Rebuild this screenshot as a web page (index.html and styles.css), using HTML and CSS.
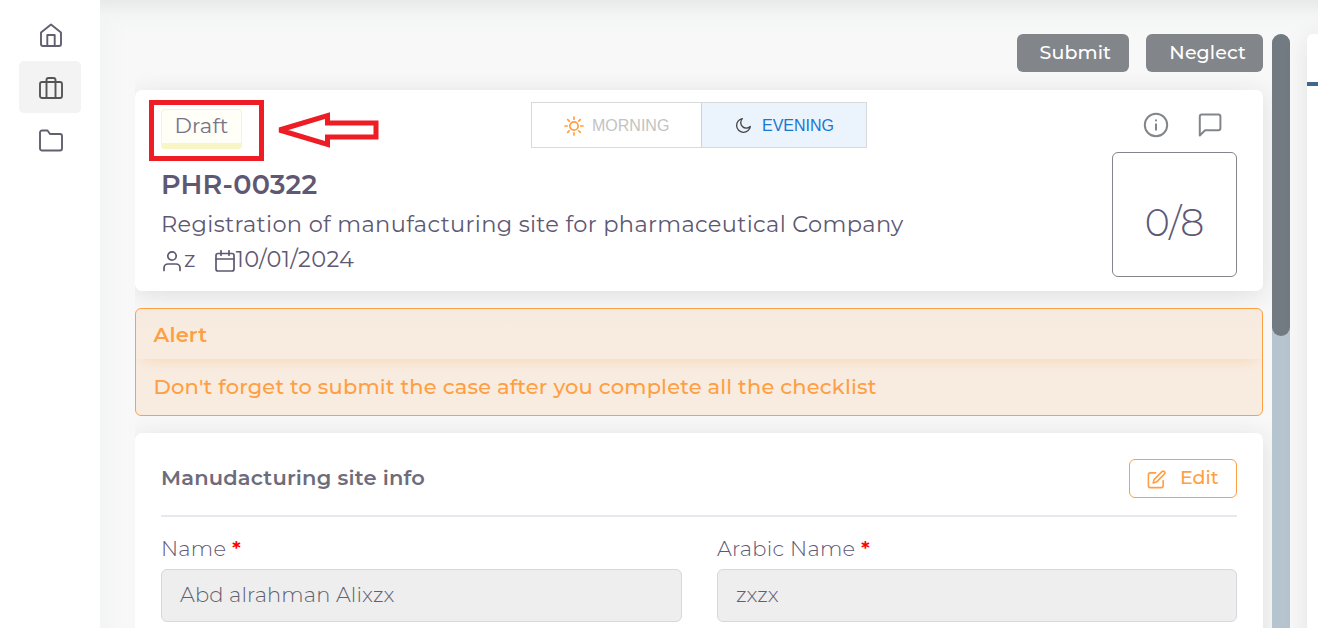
FILE: index.html
```
<!DOCTYPE html>
<html lang="en">
<head>
<meta charset="utf-8">
<title>PHR-00322</title>
<link rel="stylesheet" href="styles.css">
</head>
<body>
<div class="app">
  <nav class="sidebar">
    <a class="nav-item"><svg class="icon" viewBox="0 0 24 24"><path d="M2 9.500 12 1.500l10 8V21a2 2 0 0 1-2 2H4a2 2 0 0 1-2-2z"/><path d="M8.300 23V12h7.400v11"/></svg></a>
    <a class="nav-item active"><svg class="icon" viewBox="0 0 24 24"><rect x="1" y="6" width="22" height="16" rx="2"/><path d="M7.500 22V4a2 2 0 0 1 2-2h5a2 2 0 0 1 2 2v18"/></svg></a>
    <a class="nav-item"><svg class="icon" viewBox="0 0 24 24"><path d="M23 19.500a2 2 0 0 1-2 2H3a2 2 0 0 1-2-2v-16a2 2 0 0 1 2-2h5.500l2.500 3.500h10a2 2 0 0 1 2 2z"/></svg></a>
  </nav>
  <main class="main">
    <div class="content">
      <div class="actions">
        <button class="btn submit">Submit</button>
        <button class="btn neglect">Neglect</button>
      </div>
      <section class="card summary">
        <div class="summary-top">
          <span class="badge">Draft</span>
          <div class="toggle">
            <div class="shift morning"><svg class="sun" viewBox="0 0 20 20"><circle cx="10" cy="10" r="4.200"/><path d="M10 1v2.200M10 16.800V19M1 10h2.200M16.800 10H19M3.700 3.700l1.500 1.500M14.800 14.800l1.500 1.500M3.700 16.300l1.500-1.500M14.800 5.200l1.500-1.500"/></svg><span>MORNING</span></div>
            <div class="shift evening"><svg class="moon" viewBox="0 0 18 18"><path d="M16.200 10.100A7.300 7.300 0 1 1 7.800 1.700a5.900 5.900 0 0 0 8.400 8.400z"/></svg><span>EVENING</span></div>
          </div>
          <div class="tools">
            <svg class="tool" viewBox="0 0 26 26"><circle cx="13" cy="13" r="11.200"/><path d="M13 12.300v5.400M13 8.200v.4"/></svg>
            <svg class="tool" viewBox="0 0 26 26"><path d="M2.800 23.500V4.600a2 2 0 0 1 2-2h16.600a2 2 0 0 1 2 2v11.600a2 2 0 0 1-2 2H8.100z"/></svg>
          </div>
        </div>
        <div class="summary-body">
          <div class="details">
            <h1 class="case-id">PHR-00322</h1>
            <p class="case-name">Registration of manufacturing site for pharmaceutical Company</p>
            <div class="meta">
              <svg class="user" viewBox="0 0 20 22"><circle cx="10" cy="6" r="4.200"/><path d="M2 20.500V18a4 4 0 0 1 4-4h8a4 4 0 0 1 4 4v2.500"/></svg><span>z</span>
              <svg class="cal" viewBox="0 0 20 22"><rect x="1" y="3.500" width="18" height="17.500" rx="2"/><path d="M1 9h18M6 .8v4.400M14 .8v4.400"/></svg><span>10/01/2024</span>
            </div>
          </div>
          <div class="counter">0/8</div>
        </div>
      </section>
      <section class="alert">
        <h2 class="alert-title">Alert</h2>
        <p class="alert-text">Don't forget to submit the case after you complete all the checklist</p>
      </section>
      <section class="card form">
        <header class="form-head">
          <h2 class="form-title">Manudacturing site info</h2>
          <button class="edit"><svg class="pencil" viewBox="0 0 20 20"><path d="M9 3H3.500a2 2 0 0 0-2 2v11.500a2 2 0 0 0 2 2h11.500a2 2 0 0 0 2-2V11"/><path d="m15.500 2 .3-.3a1.700 1.700 0 0 1 2.500 2.500L10 12.700l-3.500 1 .9-3.600z"/></svg><span>Edit</span></button>
        </header>
        <div class="fields">
          <label class="field"><span class="label">Name <b class="req">*</b></span><span class="input">Abd alrahman Alixzx</span></label>
          <label class="field"><span class="label">Arabic Name <b class="req">*</b></span><span class="input">zxzx</span></label>
        </div>
      </section>
    </div>
    <div class="scroll-track"><div class="scroll-thumb"></div></div>
    <aside class="side-panel"><div class="tab-line"></div></aside>
  </main>
</div>
<div class="highlight"></div>
<svg class="arrow" viewBox="0 0 104 36"><path d="M3.500 18 51.500 3.500V11H100v14H51.500v7.500z"/></svg>
</body>
</html>
```
FILE: styles.css
```
* { box-sizing: border-box; }
body { margin: 0; height: 628px; overflow: hidden; background: #f7f7f7; color: #5e5873; font-family: Montserrat, Inter, sans-serif; position: relative; }
h1, h2, p { margin: 0; font-weight: inherit; }
svg { fill: none; stroke: currentColor; stroke-linecap: round; stroke-linejoin: round; flex: none; }
button { font-family: inherit; margin: 0; padding: 0; border: 0; }
span { white-space: nowrap; }
.app { display: flex; height: 628px; }
.sidebar { width: 100px; flex: none; padding: 8px 19px; background: #fff; display: flex; flex-direction: column; gap: 1px; }
.nav-item { height: 52px; flex: none; border-radius: 5px; display: flex; align-items: center; justify-content: center; padding: 2px 0 0 1px; color: #625f6e; }
.nav-item.active { background: #f3f3f3; color: #555; padding-top: 2px; }
.icon { width: 24px; height: 24px; stroke-width: 1.900; }
.main { flex: 1; display: flex; align-items: flex-start; padding: 34px 0 0 35px; overflow: hidden; height: 628px;
  background: linear-gradient(#e8e9e9, rgba(243,244,244,.8) 16px, rgba(247,247,247,0) 36px), linear-gradient(90deg, #f3f4f4, #f8f8f8 24px); }
.content { width: 1128px; flex: none; display: flex; flex-direction: column; clip-path: inset(0 -9px 0 0); }
.actions { display: flex; justify-content: flex-end; gap: 17px; height: 56px; }
.btn { height: 38px; border-radius: 6px; background: #82868b; color: #fff; font-size: 19px; font-weight: 500; text-align: right; padding-bottom: 2px; letter-spacing: .1px; }
.submit { width: 112px; padding-right: 18px; }
.neglect { width: 117px; padding-right: 17px; }
.card { background: #fff; border-radius: 7px; box-shadow: 0 4px 24px rgba(34,41,47,.12); }
.summary { height: 201px; padding: 12px 26px 14px; }
.summary-top { height: 50px; display: grid; grid-template-columns: 1fr auto 1fr; align-items: start; }
.badge { width: 81px; height: 40px; margin-top: 7px; border: 1px solid #f8f5c6; border-bottom: 6px solid #f8f5c6; border-radius: 4px; background: #fffef7; color: #77738a; display: flex; align-items: center; justify-content: center; padding-bottom: 2px; font-size: 21px; letter-spacing: .2px; }
.toggle { display: flex; width: 336px; height: 46px; border: 1px solid #d8d9dc; font-family: "Liberation Sans", Arial, sans-serif; font-size: 16px; }
.shift { display: flex; align-items: center; }
.morning { width: 169px; padding-left: 32px; gap: 8px; color: #c3c3c3; }
.evening { flex: 1; border-left: 1px solid #ccd1dc; background: #ebf3fc; padding-left: 33px; gap: 10px; color: #1976d2; }
.shift span { padding-top: 1px; }
.sun { width: 20px; height: 20px; margin-top: 1px; color: #ff9f43; stroke-width: 1.700; }
.moon { width: 17px; height: 17px; margin-top: 1px; color: #444; stroke-width: 1.400; }
.tools { display: flex; justify-content: flex-end; gap: 28px; padding: 10px 14px 0 0; color: #82868b; }
.tool { width: 26px; height: 26px; stroke-width: 2; }
.summary-body { display: flex; justify-content: space-between; }
.details { padding-top: 15px; }
.case-id { height: 39px; line-height: 35px; font-size: 27px; font-weight: 600; letter-spacing: .2px; }
.case-name { height: 36px; line-height: 37px; font-size: 22.500px; letter-spacing: .34px; }
.meta { height: 33px; display: flex; align-items: center; font-size: 22.500px; letter-spacing: .34px; line-height: 33px; padding-top: 1px; }
.user { width: 20px; height: 22px; margin: 4px 2px 0 1px; stroke-width: 1.700; }
.cal { width: 20px; height: 22px; margin: 3px 1px 0 19px; stroke-width: 1.700; }
.counter { width: 125px; height: 125px; border: 1px solid #82868b; border-radius: 6px; display: flex; align-items: center; justify-content: center; padding-top: 16px; font-size: 38px; font-weight: 300; color: #5e5873; }
.alert { margin: 17px 0; height: 108px; flex: none; border: 1px solid #ff9f43; border-radius: 6px; background: linear-gradient(#f6e9df, #f8ece1 20px); color: #ff9f43; overflow: hidden; letter-spacing: .17px; }
.alert-title { height: 50px; padding-left: 17.500px; line-height: 52px; font-size: 21px; font-weight: 600; box-shadow: 0 6px 15px -7px rgba(255,159,67,.4); }
.alert-text { padding-left: 17.500px; line-height: 56px; font-size: 21px; font-weight: 500; }
.form { height: 260px; flex: none; padding: 26px 26px 0; }
.form-head { height: 58px; border-bottom: 2px solid #e8e8ee; display: flex; justify-content: space-between; }
.form-title { font-size: 21px; font-weight: 600; line-height: 38px; letter-spacing: .19px; color: #6e6b7b; }
.edit { width: 108px; height: 39px; border: 1px solid #ff9f43; border-radius: 6px; background: #fff; color: #ff9f43; display: flex; align-items: center; padding: 0 0 2px 17px; gap: 14px; font-size: 19px; font-weight: 500; }
.pencil { width: 19px; height: 19px; margin-top: 4px; stroke-width: 1.700; }
.fields { display: grid; grid-template-columns: 521px 520px; gap: 35px; padding-top: 14px; }
.field { display: flex; flex-direction: column; }
.label { height: 38px; line-height: 36px; font-size: 21px; letter-spacing: .26px; font-weight: 300; }
.req { color: #f00; font-weight: 600; }
.input { height: 53px; border: 1px solid #d8d6de; border-radius: 6px; background: #eee; padding-left: 18px; line-height: 50px; font-size: 21px; letter-spacing: .13px; font-weight: 300; color: #625f6e; }
.scroll-track { width: 18px; height: 620px; flex: none; margin-left: 9px; border-radius: 9px; background: #b5c4ce; }
.scroll-thumb { height: 302px; border-radius: 9px; background: #737b82; }
.side-panel { width: 40px; height: 620px; flex: none; margin-left: 17px; border-radius: 6px 0 0 0; background: #fff; box-shadow: 0 4px 24px rgba(34,41,47,.1); padding-top: 48px; }
.tab-line { height: 4px; background: #40688a; }
.highlight { position: absolute; left: 149px; top: 100px; width: 115px; height: 61px; border: 5px solid #ee1c24; }
.arrow { position: absolute; left: 276px; top: 112px; width: 104px; height: 36px; color: #ee1c24; stroke-width: 5; stroke-linejoin: miter; stroke-miterlimit: 2; }
```
